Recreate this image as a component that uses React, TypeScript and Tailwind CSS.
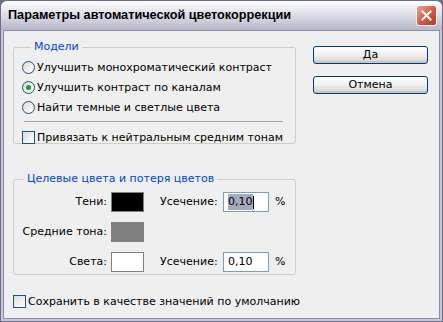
import React from 'react';

const font = { fontFamily: '"DejaVu Sans", Tahoma, sans-serif' };

function Radio({ checked, label }: { checked?: boolean; label: string }) {
  return (
    <div className="flex items-center h-[20px]">
      <span className="relative w-[13px] h-[13px] rounded-full border border-[#1c5180] bg-gradient-to-br from-[#dcdcd6] to-white flex items-center justify-center">
        {checked && <span className="w-[5px] h-[5px] rounded-full bg-[#21a121]" />}
      </span>
      <span className="ml-[2px] text-[11px] text-black leading-none">{label}</span>
    </div>
  );
}

function Check({ label }: { label: string }) {
  return (
    <div className="flex items-center h-[16px]">
      <span className="w-[13px] h-[13px] border border-[#1c5180] bg-gradient-to-br from-[#dcdcd6] to-white" />
      <span className="ml-[2px] text-[11px] text-black leading-none">{label}</span>
    </div>
  );
}

function Button({ label }: { label: string }) {
  return (
    <div className="w-[115px] h-[18px] rounded-[3px] border border-[#003c74] bg-gradient-to-b from-white via-[#f0f0ee] to-[#d6d0c5] flex items-center justify-center text-[11px] text-black shadow-[inset_0_-2px_0_#c5c5d8]">
      {label}
    </div>
  );
}

function Row({ label, color, value, selected }: { label: string; color: string; value?: string; selected?: boolean }) {
  return (
    <div className="flex items-center h-[20px]">
      <span className="w-[96px] text-right text-[11px] text-black pr-[4px]">{label}</span>
      <span className={`w-[33px] h-[20px] border border-[#808080] ${color}`} />
      {value && (
        <>
          <span className="ml-[16px] w-[63px] text-[11px] text-black">Усечение:</span>
          <span className="w-[46px] h-[20px] border border-[#7f9db9] bg-white flex items-center pl-[4px] text-[11px] text-black">
            {selected ? (
              <>
                <span className="bg-[#a6aabe]">{value}</span>
                <span className="w-px h-[13px] bg-black" />
              </>
            ) : (
              value
            )}
          </span>
          <span className="ml-[6px] text-[11px] text-black">%</span>
        </>
      )}
    </div>
  );
}

export default function App() {
  return (
    <div style={font} className="w-[443px] h-[322px] bg-[#6e6e8c] p-px">
      <div className="w-full h-full flex flex-col bg-[#c6c6d6] rounded-t-[6px]">
        {/* title bar */}
        <div className="h-[29px] flex items-center justify-between pl-[7px] pr-[5px] rounded-t-[6px] bg-gradient-to-b from-[#fdfdfd] via-[#dcdce6] to-[#b6b6c8]">
          <span style={{ fontFamily: '"Liberation Sans", Arial, sans-serif' }} className="text-[12.7px] font-bold text-black">
            Параметры автоматической цветокоррекции
          </span>
          <span className="w-[21px] h-[21px] rounded-[3px] border border-white bg-gradient-to-br from-[#e9a394] via-[#d65d45] to-[#b33a22] flex items-center justify-center">
            <svg width="11" height="11" viewBox="0 0 11 11">
              <path d="M1.5 1.5 L9.5 9.5 M9.5 1.5 L1.5 9.5" stroke="white" strokeWidth="2" strokeLinecap="square" />
            </svg>
          </span>
        </div>
        {/* client */}
        <div className="flex-1 mx-[2px] mb-[2px] border border-[#8e8ea8] bg-[#efefef] flex flex-col pl-[9px] pt-[9px]">
          <div className="flex">
            <div className="flex flex-col">
              <fieldset className="w-[283px] h-[104px] border border-[#d0d0bf] rounded-[3px] pl-[8px] pr-[12px] pt-[4px] m-0">
                <legend className="ml-[9px] px-[3px] text-[11px] text-[#0046d5] leading-[14px]">Модели</legend>
                <div className="-mt-px">
                  <Radio label="Улучшить монохроматический контраст" />
                  <Radio checked label="Улучшить контраст по каналам" />
                  <Radio label="Найти темные и светлые цвета" />
                </div>
                <div className="h-px bg-[#a0a0a0] mt-[4px] ml-[2px]" />
                <div className="mt-[7px]">
                  <Check label="Привязать к нейтральным средним тонам" />
                </div>
              </fieldset>
              <fieldset className="w-[283px] h-[103px] border border-[#d0d0bf] rounded-[3px] mt-[28px] m-0 pl-px pt-[7px]">
                <legend className="ml-[9px] px-[3px] text-[11px] text-[#0046d5] leading-[14px]">Целевые цвета и потеря цветов</legend>
                <div className="flex flex-col gap-[10px] -mt-[1px]">
                  <Row label="Тени:" color="bg-black" value="0,10" selected />
                  <Row label="Средние тона:" color="bg-[#808080]" />
                  <Row label="Света:" color="bg-white" value="0,10" />
                </div>
              </fieldset>
            </div>
            <div className="flex flex-col gap-[12px] ml-[17px] mt-[6px]">
              <Button label="Да" />
              <Button label="Отмена" />
            </div>
          </div>
          <div className="mt-[18px]">
            <Check label="Сохранить в качестве значений по умолчанию" />
          </div>
        </div>
      </div>
    </div>
  );
}
